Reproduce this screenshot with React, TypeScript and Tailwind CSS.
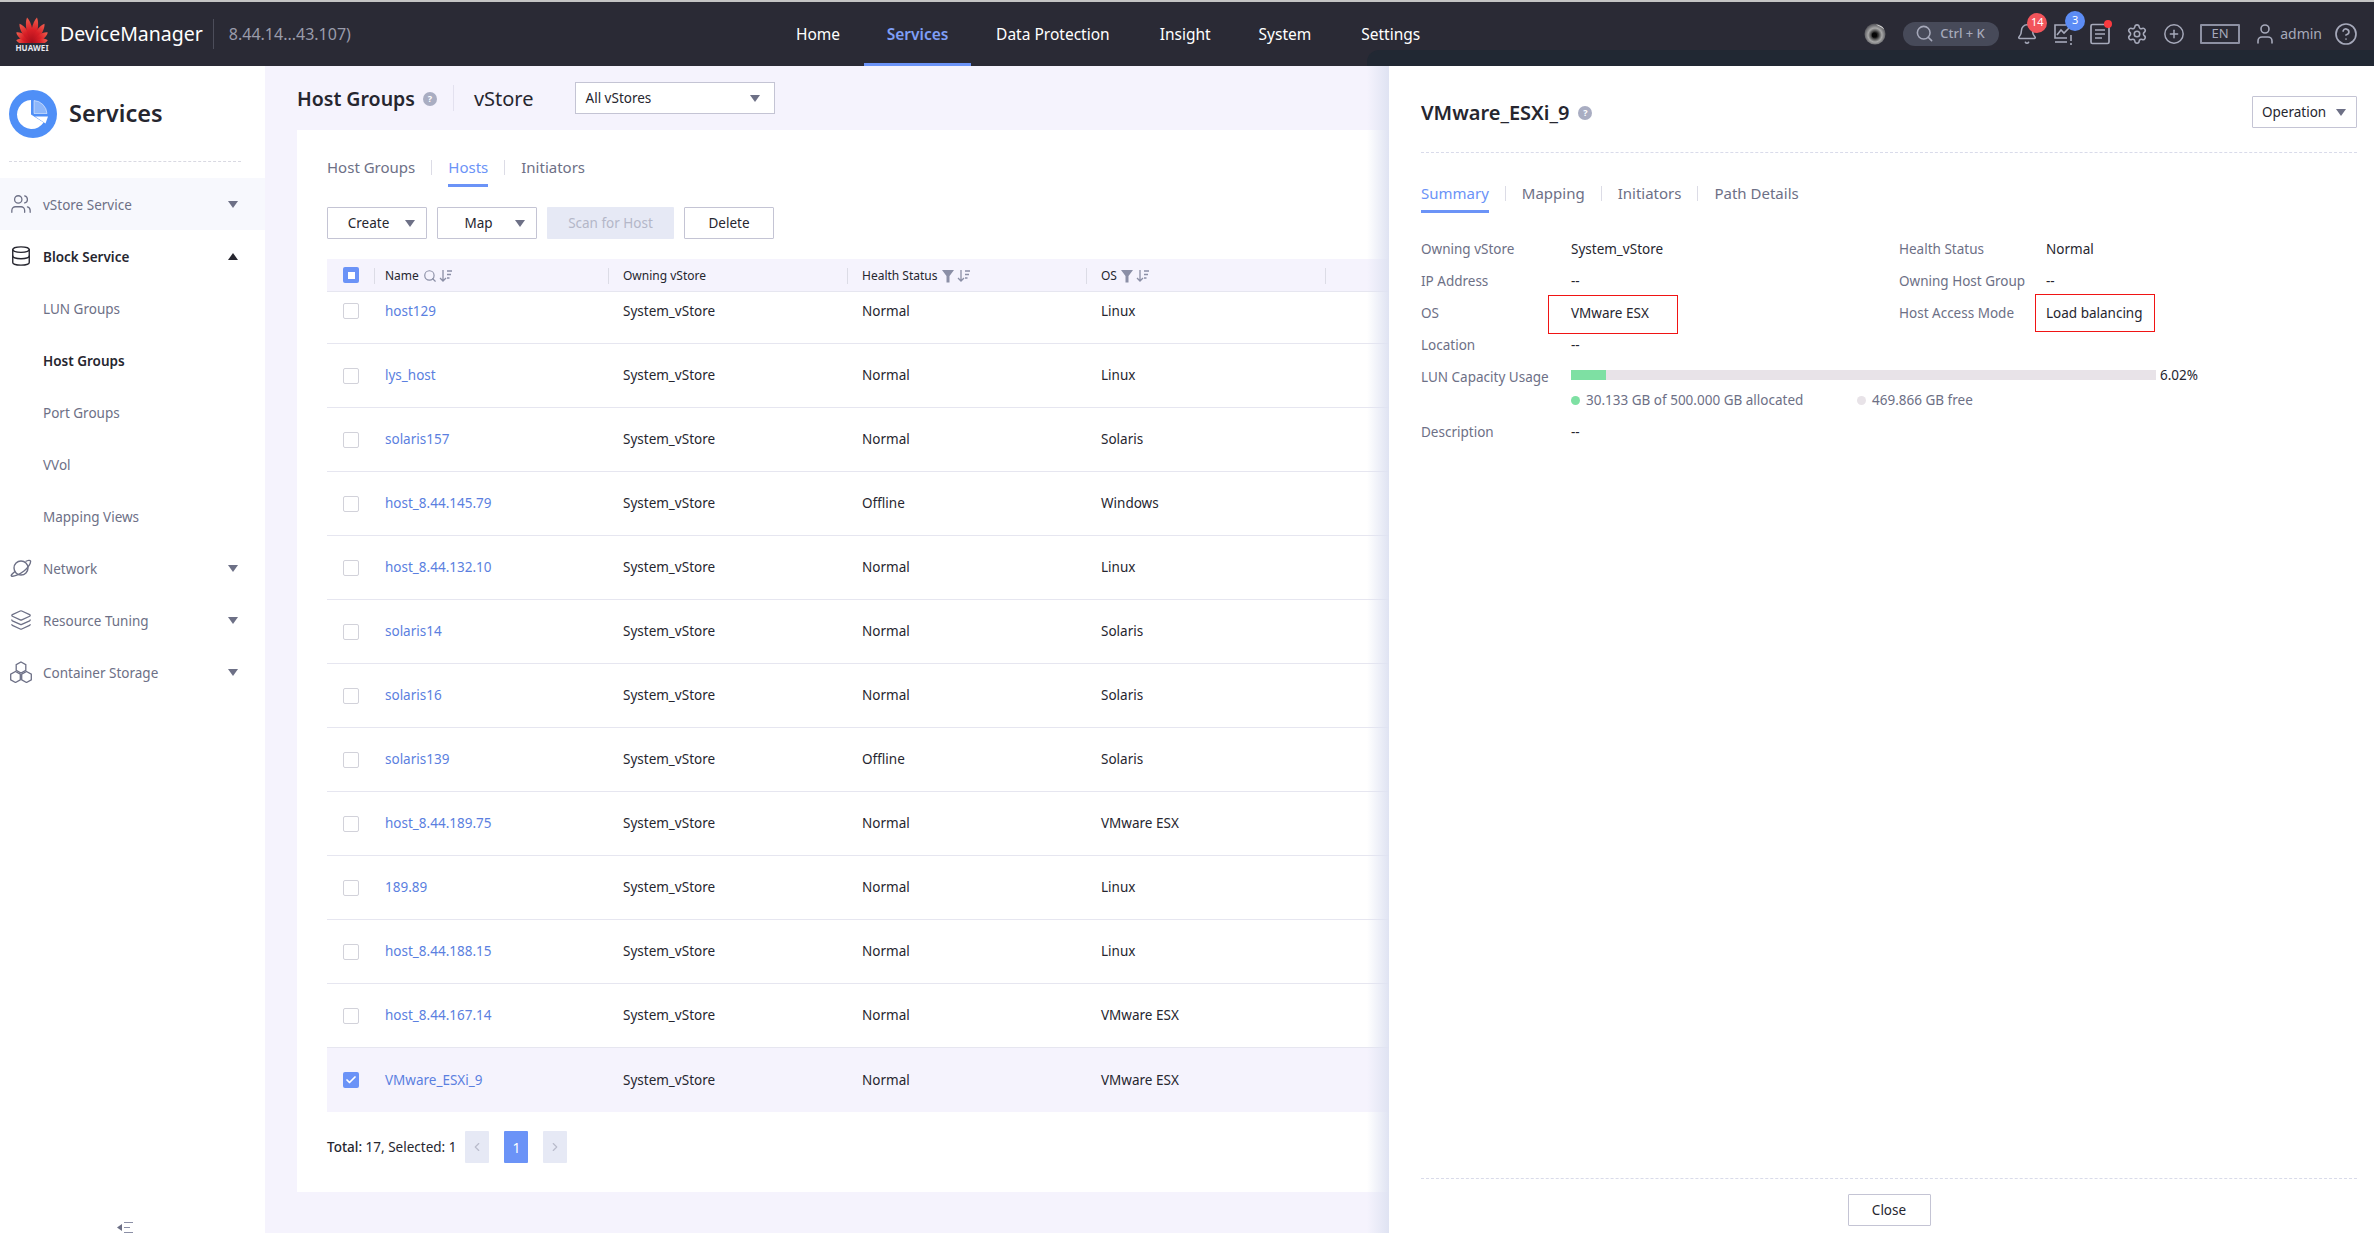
import { Search, Bell, Settings, CirclePlus, User, CircleHelp, Database, Layers, Users, Check, ChevronLeft, ChevronRight } from 'lucide-react';

const hosts = [
  ['host129', 'Normal', 'Linux'],
  ['lys_host', 'Normal', 'Linux'],
  ['solaris157', 'Normal', 'Solaris'],
  ['host_8.44.145.79', 'Offline', 'Windows'],
  ['host_8.44.132.10', 'Normal', 'Linux'],
  ['solaris14', 'Normal', 'Solaris'],
  ['solaris16', 'Normal', 'Solaris'],
  ['solaris139', 'Offline', 'Solaris'],
  ['host_8.44.189.75', 'Normal', 'VMware ESX'],
  ['189.89', 'Normal', 'Linux'],
  ['host_8.44.188.15', 'Normal', 'Linux'],
  ['host_8.44.167.14', 'Normal', 'VMware ESX'],
  ['VMware_ESXi_9', 'Normal', 'VMware ESX'],
];

function Caret({ up = false, className = 'text-[#6d7086]' }: { up?: boolean; className?: string }) {
  return (
    <svg width="10" height="7" viewBox="0 0 10 7" className={className}>
      <path d={up ? 'M5 0L10 7H0Z' : 'M0 0H10L5 7Z'} fill="currentColor" />
    </svg>
  );
}

function HelpDot({ size = 'w-[14px] h-[14px]' }: { size?: string }) {
  return (
    <span className={`${size} rounded-full bg-[#a9adc2] text-white text-[9px] font-bold flex items-center justify-center`}>?</span>
  );
}

function SortIcon() {
  return (
    <svg width="14" height="14" viewBox="0 0 14 14" className="text-[#8b8fa6]">
      <path d="M4 1V12M1 9l3 3 3-3" fill="none" stroke="currentColor" strokeWidth="1.3" />
      <path d="M8 2h5M8 5.5h4M8 9h2.5" fill="none" stroke="currentColor" strokeWidth="1.6" />
    </svg>
  );
}

function FilterIcon() {
  return (
    <svg width="12" height="14" viewBox="0 0 12 14" className="text-[#8b8fa6]">
      <path d="M0 1h12L7.5 7v6.5h-3V7Z" fill="currentColor" />
    </svg>
  );
}

function HuaweiLogo() {
  const petals = [
    [-80, 16], [-56, 19], [-33, 23], [-11, 26], [11, 26], [33, 23], [56, 19], [80, 16],
  ];
  return (
    <div className="w-[36px] flex flex-col items-center">
      <svg width="34" height="26" viewBox="0 0 34 26">
        <defs>
          <linearGradient id="petal" x1="0" y1="0" x2="0" y2="1">
            <stop offset="0" stopColor="#f0604f" />
            <stop offset="0.5" stopColor="#d91f26" />
            <stop offset="1" stopColor="#a90d1a" />
          </linearGradient>
        </defs>
        {petals.map(([angle, len]) => (
          <path
            key={angle}
            d={`M0 0C-4.2 -${len * 0.35} -3.6 -${len * 0.8} 0 -${len}C3.6 -${len * 0.8} 4.2 -${len * 0.35} 0 0Z`}
            transform={`translate(17 26) rotate(${angle})`}
            fill="url(#petal)"
          />
        ))}
      </svg>
      <span className="text-[8px] leading-[9px] font-bold text-[#e8e8ee] tracking-[0.1px]">HUAWEI</span>
    </div>
  );
}

function Lens() {
  return (
    <svg width="22" height="22" viewBox="0 0 22 22">
      <defs>
        <radialGradient id="lens" cx="0.5" cy="0.55" r="0.55">
          <stop offset="0.25" stopColor="#222" />
          <stop offset="0.6" stopColor="#a8a8a8" />
          <stop offset="1" stopColor="#4a4a50" />
        </radialGradient>
      </defs>
      <circle cx="11" cy="11" r="10.5" fill="url(#lens)" />
      <path d="M12 1.5c4 .5 7.5 2.5 8 5-2-2-5-3.5-8-5Z" fill="#e8e8e8" />
      <circle cx="10.5" cy="12" r="2.6" fill="#050505" />
    </svg>
  );
}

function ChartAlert() {
  return (
    <svg width="22" height="24" viewBox="0 0 22 24" fill="none" stroke="#a6a9ba" strokeWidth="1.6">
      <path d="M13 2H2v13h12" />
      <path d="M4 12l4-5 3 3 6-6" />
      <path d="M2 19h12" />
      <path d="M18 12v6M18 20v2" />
    </svg>
  );
}

function DocList() {
  return (
    <svg width="20" height="22" viewBox="0 0 20 22" fill="none" stroke="#a6a9ba" strokeWidth="1.7">
      <rect x="1" y="1.5" width="18" height="19" rx="1.5" />
      <path d="M5 7h10M5 11h10M5 15h7" />
    </svg>
  );
}

function ServicesIcon() {
  return (
    <svg width="48" height="48" viewBox="0 0 48 48">
      <circle cx="24" cy="24" r="24" fill="#4f8ff7" />
      <path d="M22 10A14.5 14.5 0 1 0 34.6 32.5L22 24.5Z" fill="#fff" />
      <path d="M25 10.5A14 14 0 0 1 38 23.5H25Z" fill="#dbe8fd" fillOpacity="0.45" stroke="#fff" strokeWidth="0.5" />
      <path d="M26 26.5H39L36.5 33.5Z" fill="#fff" />
    </svg>
  );
}

function PlanetIcon() {
  return (
    <svg width="22" height="18" viewBox="0 0 22 18" fill="none" stroke="#6d7086" strokeWidth="1.4">
      <circle cx="11" cy="9" r="7" />
      <path d="M5 12.5C2 15 .5 16.5 1.5 17c2 1 8-1.5 12.5-5s7-8 6.5-10c-.4-1-2.5-.8-5 .5" />
    </svg>
  );
}

function HexIcon() {
  const hex = 'M0 -5.5L4.8 -2.75V2.75L0 5.5L-4.8 2.75V-2.75Z';
  return (
    <svg width="22" height="22" viewBox="0 0 22 22" fill="none" stroke="#6d7086" strokeWidth="1.3">
      <path d={hex} transform="translate(11 6.5)" />
      <path d={hex} transform="translate(5.5 16)" />
      <path d={hex} transform="translate(16.5 16)" />
    </svg>
  );
}

function Tab({ label, active = false, last = false }: { label: string; active?: boolean; last?: boolean }) {
  return (
    <>
      <div className={`h-[34px] pt-[3px] border-b-[3px] text-[15px] leading-[22px] ${active ? 'border-[#6b93f7] text-[#6b93f7]' : 'border-transparent text-[#6d7086]'}`}>
        {label}
      </div>
      {!last && <span className="w-px h-[15px] mt-[7px] mx-[16px] bg-[#dcdce6]" />}
    </>
  );
}

function OutlineButton({ label, width, caret = false }: { label: string; width: string; caret?: boolean }) {
  return (
    <button className={`${width} h-[32px] border border-[#c4c4d4] bg-white text-[13.5px] text-[#26262f] flex items-center justify-center relative rounded-[1px]`}>
      <span className={caret ? '-ml-[17px]' : ''}>{label}</span>
      {caret && (
        <span className="absolute right-[11px] top-[12px]">
          <Caret />
        </span>
      )}
    </button>
  );
}

function NavRow({ icon, label, bold = false, open = false, tinted = false, caret = true }: { icon?: React.ReactNode; label: string; bold?: boolean; open?: boolean; tinted?: boolean; caret?: boolean }) {
  return (
    <div className={`h-[52px] flex items-center text-[13.5px] ${tinted ? 'bg-[#f7f8fd]' : ''} ${bold ? 'font-semibold text-[#26262f]' : 'text-[#6d7086]'}`}>
      <span className="w-[43px] pl-[10px] flex items-center">{icon}</span>
      <span className="flex-1 pt-[2px]">{label}</span>
      {caret && (
        <span className="mr-[27px]">
          <Caret up={open} className={open ? 'text-[#26262f]' : 'text-[#6d7086]'} />
        </span>
      )}
    </div>
  );
}

function Checkbox({ checked = false }: { checked?: boolean }) {
  if (checked) {
    return (
      <span className="w-[16px] h-[16px] rounded-[2px] bg-[#6b93f7] flex items-center justify-center">
        <Check size={12} strokeWidth={3.5} className="text-white" />
      </span>
    );
  }
  return <span className="block w-[16px] h-[16px] rounded-[2px] border border-[#d2d2da] bg-white" />;
}

function HeadCell({ label, children, first = false }: { label: string; children?: React.ReactNode; first?: boolean }) {
  return (
    <div className="flex items-center text-[12px] text-[#26262f] pt-[1px]">
      <span className={`w-px h-[16px] bg-[#dcdce6] ${first ? '-ml-[11px] mr-[10px]' : '-ml-[15px] mr-[14px]'}`} />
      <span className="mr-[4px]">{label}</span>
      {children}
    </div>
  );
}

function PageButton({ children, active = false }: { children: React.ReactNode; active?: boolean }) {
  return (
    <span className={`w-[24px] h-[32px] rounded-[1px] flex items-center justify-center text-[14px] ${active ? 'bg-[#6b93f7] text-white' : 'bg-[#e6e9f5] text-[#b9bccb]'}`}>
      {children}
    </span>
  );
}

const labelClass = 'text-[13.5px] text-[#6d7086]';
const valueClass = 'text-[13.5px] text-[#26262f]';

export default function App() {
  const iconColor = '#a6a9ba';
  return (
    <div className="w-[2374px] h-[1233px] overflow-hidden flex flex-col bg-[#f5f3fd] font-['Noto_Sans',sans-serif]">
      <header className="relative h-[66px] shrink-0 border-t-2 border-[#c4c4c4] bg-[#2a2a35] flex items-center">
        <div className="absolute right-0 top-[48px] h-[16px] w-[1007px] rounded-tl-xl bg-[#212833]" />
        <div className="relative flex items-center pl-[14px] w-[774px]">
          <HuaweiLogo />
          <span className="ml-[10px] text-[19.5px] text-white">DeviceManager</span>
          <span className="ml-[10px] w-px h-[30px] bg-[#4c4d5a]" />
          <span className="ml-[15px] text-[16px] text-[#9a9cab]">8.44.14...43.107)</span>
        </div>
        <nav className="relative flex h-full text-[15.5px] text-white">
          <a className="pl-[22px] pr-[24px] pt-[1px] flex items-center">Home</a>
          <a className="w-[107px] justify-center flex items-center font-semibold text-[#7f9ff7] border-b-[3px] border-[#6b93f7] pt-[4px]">Services</a>
          <a className="px-[25px] pt-[1px] flex items-center">Data Protection</a>
          <a className="pl-[25px] pr-[23px] pt-[1px] flex items-center">Insight</a>
          <a className="px-[25px] pt-[1px] flex items-center">System</a>
          <a className="px-[25px] pt-[1px] flex items-center">Settings</a>
        </nav>
        <div className="relative ml-auto flex items-center pr-[16px] -mt-[1px]">
          <Lens />
          <div className="ml-[17px] w-[96px] h-[24px] rounded-full bg-[#474a59] flex items-center pl-[12px] text-[13px] font-medium text-[#a6a9ba]">
            <Search size={19} color={iconColor} className="mr-[6px] shrink-0" />
            <span className="whitespace-nowrap">Ctrl + K</span>
          </div>
          <div className="relative ml-[17px]">
            <Bell size={22} color={iconColor} strokeWidth={1.7} />
            <span className="absolute -top-[10px] left-[11px] w-[20px] h-[20px] rounded-full bg-[#f2545b] text-white text-[11px] flex items-center justify-center">14</span>
          </div>
          <div className="relative ml-[15px] mt-[2px]">
            <ChartAlert />
            <span className="absolute -top-[12px] left-[12px] w-[20px] h-[20px] rounded-full bg-[#5c8cf5] text-white text-[11px] flex items-center justify-center">3</span>
          </div>
          <div className="relative ml-[15px]">
            <DocList />
            <span className="absolute -top-[3px] right-[-2px] w-[8px] h-[8px] rounded-full bg-[#f93a3f]" />
          </div>
          <Settings size={22} color={iconColor} strokeWidth={1.7} className="ml-[16px]" />
          <CirclePlus size={22} color={iconColor} strokeWidth={1.6} className="ml-[15px]" />
          <span className="ml-[15px] w-[40px] h-[20px] border-2 border-[#8d90a2] rounded-[1px] text-[13px] text-[#a6a9ba] flex items-center justify-center">EN</span>
          <User size={24} color={iconColor} strokeWidth={1.6} className="ml-[13px]" />
          <span className="ml-[3px] text-[14px] text-[#a6a9ba]">admin</span>
          <CircleHelp size={24} color={iconColor} strokeWidth={1.7} className="ml-[12px]" />
        </div>
      </header>

      <div className="flex-1 flex min-h-0">
        <aside className="w-[265px] shrink-0 bg-white flex flex-col">
          <div className="h-[95px] pl-[9px] flex items-center">
            <ServicesIcon />
            <span className="ml-[12px] mt-[1px] text-[23.5px] font-semibold text-[#26262f]">Services</span>
          </div>
          <div className="ml-[9px] w-[232px] border-b border-dashed border-[#d9d9e2]" />
          <div className="mt-[16px]">
            <NavRow icon={<Users size={22} color="#6d7086" strokeWidth={1.4} />} label="vStore Service" tinted />
            <NavRow icon={<Database size={22} color="#26262f" strokeWidth={1.5} />} label="Block Service" bold open />
            <NavRow label="LUN Groups" caret={false} />
            <NavRow label="Host Groups" bold caret={false} />
            <NavRow label="Port Groups" caret={false} />
            <NavRow label="VVol" caret={false} />
            <NavRow label="Mapping Views" caret={false} />
            <NavRow icon={<PlanetIcon />} label="Network" />
            <NavRow icon={<Layers size={22} color="#6d7086" strokeWidth={1.4} />} label="Resource Tuning" />
            <NavRow icon={<HexIcon />} label="Container Storage" />
          </div>
          <div className="mt-auto pl-[117px] h-[11px] overflow-hidden">
            <svg width="16" height="11" viewBox="0 0 16 11" className="block">
              <path d="M5 2v7L0 5.5Z" fill="#6d7086" />
              <path d="M7 .5h9M7 5.5h6M7 10.5h9" stroke="#8b8fa6" strokeWidth="1.2" />
            </svg>
          </div>
        </aside>

        <main className="flex-1 min-w-0 overflow-hidden pl-[32px] flex flex-col">
          <div className="h-[64px] shrink-0 flex items-center">
            <h1 className="mt-[2px] text-[19.5px] font-semibold text-[#26262f]">Host Groups</h1>
            <span className="ml-[8px] mt-[2px]">
              <HelpDot />
            </span>
            <span className="ml-[16px] w-px h-[26px] bg-[#e3e1ef]" />
            <span className="ml-[20px] mt-[2px] text-[20px] text-[#26262f]">vStore</span>
            <div className="ml-[41px] w-[200px] h-[32px] border border-[#c4c4d4] bg-white flex items-center justify-between pl-[10px] pr-[14px] text-[13.5px] text-[#26262f]">
              <span>All vStores</span>
              <Caret />
            </div>
          </div>

          <section className="h-[1062px] shrink-0 bg-white pl-[30px] pt-[23px]">
            <div className="flex items-start">
              <Tab label="Host Groups" />
              <Tab label="Hosts" active />
              <Tab label="Initiators" last />
            </div>
            <div className="mt-[20px] flex gap-[10px]">
              <OutlineButton label="Create" width="w-[100px]" caret />
              <OutlineButton label="Map" width="w-[100px]" caret />
              <button className="w-[127px] h-[32px] bg-[#e6e9f5] text-[13.5px] text-[#b4b7c8] rounded-[1px]">Scan for Host</button>
              <OutlineButton label="Delete" width="w-[90px]" />
            </div>

            <div className="mt-[20px] w-[1400px]">
              <div className="h-[33px] grid grid-cols-[58px_238px_239px_239px_239px_1fr] items-center bg-[#f5f3fd] border-b border-[#e6e6f0]">
                <div className="pl-[16px]">
                  <span className="w-[16px] h-[16px] rounded-[2px] bg-[#6b93f7] flex items-center justify-center">
                    <span className="w-[7px] h-[7px] bg-white" />
                  </span>
                </div>
                <HeadCell label="Name" first>
                  <Search size={14} color="#8b8fa6" className="mr-[2px]" />
                  <SortIcon />
                </HeadCell>
                <HeadCell label="Owning vStore" />
                <HeadCell label="Health Status">
                  <FilterIcon />
                  <span className="ml-[3px]"><SortIcon /></span>
                </HeadCell>
                <HeadCell label="OS">
                  <FilterIcon />
                  <span className="ml-[3px]"><SortIcon /></span>
                </HeadCell>
                <HeadCell label="" />
              </div>
              {hosts.map(([name, status, os], i) => {
                const selected = name === 'VMware_ESXi_9';
                return (
                  <div
                    key={name}
                    className={`grid grid-cols-[58px_238px_239px_239px_239px_1fr] items-center text-[13.5px] text-[#26262f] ${i === 0 ? 'h-[52px] pb-[13px] border-b border-[#e6e6f0]' : 'h-[64px]'} ${i > 0 && !selected ? 'border-b border-[#e6e6f0]' : ''} ${selected ? 'bg-[#f5f3fd]' : ''}`}
                  >
                    <div className="pl-[16px]">
                      <Checkbox checked={selected} />
                    </div>
                    <a className="text-[#5b7fe0]">{name}</a>
                    <span>System_vStore</span>
                    <span>{status}</span>
                    <span>{os}</span>
                  </div>
                );
              })}
              <div className="mt-[19px] h-[32px] flex items-center text-[13.5px] text-[#26262f]">
                <span><span className="font-medium">Total:</span> 17, Selected: 1</span>
                <span className="ml-[9px] flex gap-[15px]">
                  <PageButton><ChevronLeft size={14} /></PageButton>
                  <PageButton active>1</PageButton>
                  <PageButton><ChevronRight size={14} /></PageButton>
                </span>
              </div>
            </div>
          </section>
        </main>

        <aside className="relative w-[985px] shrink-0 bg-white flex flex-col">
          <div className="absolute -left-[22px] top-0 bottom-0 w-[22px] bg-gradient-to-r from-transparent to-[#dfe3f2]" />
          <div className="ml-[32px] mr-[17px] h-[87px] pt-[6px] border-b border-dashed border-[#d9dbea] flex items-center justify-between">
            <div className="flex items-center">
              <h2 className="mt-[2px] text-[20px] font-semibold text-[#26262f]">VMware_ESXi_9</h2>
              <span className="ml-[9px] mt-[2px]">
                <HelpDot />
              </span>
            </div>
            <button className="w-[105px] h-[32px] border border-[#c4c4d4] text-[13.5px] text-[#26262f] flex items-center pl-[9px] gap-[10px] rounded-[1px]">
              <span>Operation</span>
              <Caret />
            </button>
          </div>
          <div className="ml-[32px] mt-[26px] flex items-start">
            <Tab label="Summary" active />
            <Tab label="Mapping" />
            <Tab label="Initiators" />
            <Tab label="Path Details" last />
          </div>

          <div className="ml-[32px] mt-[20px] grid grid-cols-[150px_328px_147px_1fr] auto-rows-[32px] items-center">
            <span className={labelClass}>Owning vStore</span>
            <span className={valueClass}>System_vStore</span>
            <span className={labelClass}>Health Status</span>
            <span className={valueClass}>Normal</span>
            <span className={labelClass}>IP Address</span>
            <span className={valueClass}>--</span>
            <span className={labelClass}>Owning Host Group</span>
            <span className={valueClass}>--</span>
            <span className={labelClass}>OS</span>
            <div className={`relative ${valueClass}`}>
              VMware ESX
              <span className="absolute -left-[23px] -top-[8px] w-[130px] h-[39px] border border-[#f01414]" />
            </div>
            <span className={labelClass}>Host Access Mode</span>
            <div className={`relative ${valueClass}`}>
              Load balancing
              <span className="absolute -left-[11px] -top-[9px] w-[120px] h-[38px] border border-[#f01414]" />
            </div>
            <span className={labelClass}>Location</span>
            <span className={`${valueClass} col-span-3`}>--</span>
          </div>

          <div className="ml-[32px] h-[32px] flex items-center">
            <span className={`${labelClass} w-[150px]`}>LUN Capacity Usage</span>
            <div className="mb-[4px] flex items-center">
              <div className="w-[585px] h-[10px] bg-[#e8e3e8]">
                <div className="h-full bg-[#7ee0a3]" style={{ width: '6.02%' }} />
              </div>
              <span className="ml-[4px] text-[13.5px] text-[#26262f]">6.02%</span>
            </div>
          </div>
          <div className="ml-[182px] h-[14px] flex items-center text-[13.5px] text-[#6d7086]">
            <span className="w-[9px] h-[9px] rounded-full bg-[#7ee0a3]" />
            <span className="ml-[6px] w-[271px]">30.133 GB of 500.000 GB allocated</span>
            <span className="w-[9px] h-[9px] rounded-full bg-[#e8e3e8]" />
            <span className="ml-[6px]">469.866 GB free</span>
          </div>
          <div className="ml-[32px] mt-[9px] h-[32px] flex items-center">
            <span className={`${labelClass} w-[150px]`}>Description</span>
            <span className={valueClass}>--</span>
          </div>

          <div className="mt-auto ml-[32px] mr-[17px] h-[55px] pt-[15px] border-t border-dashed border-[#d9dbea] flex justify-center">
            <button className="w-[83px] h-[32px] border border-[#c4c4d4] text-[13.5px] text-[#26262f] rounded-[1px]">Close</button>
          </div>
        </aside>
      </div>
    </div>
  );
}
